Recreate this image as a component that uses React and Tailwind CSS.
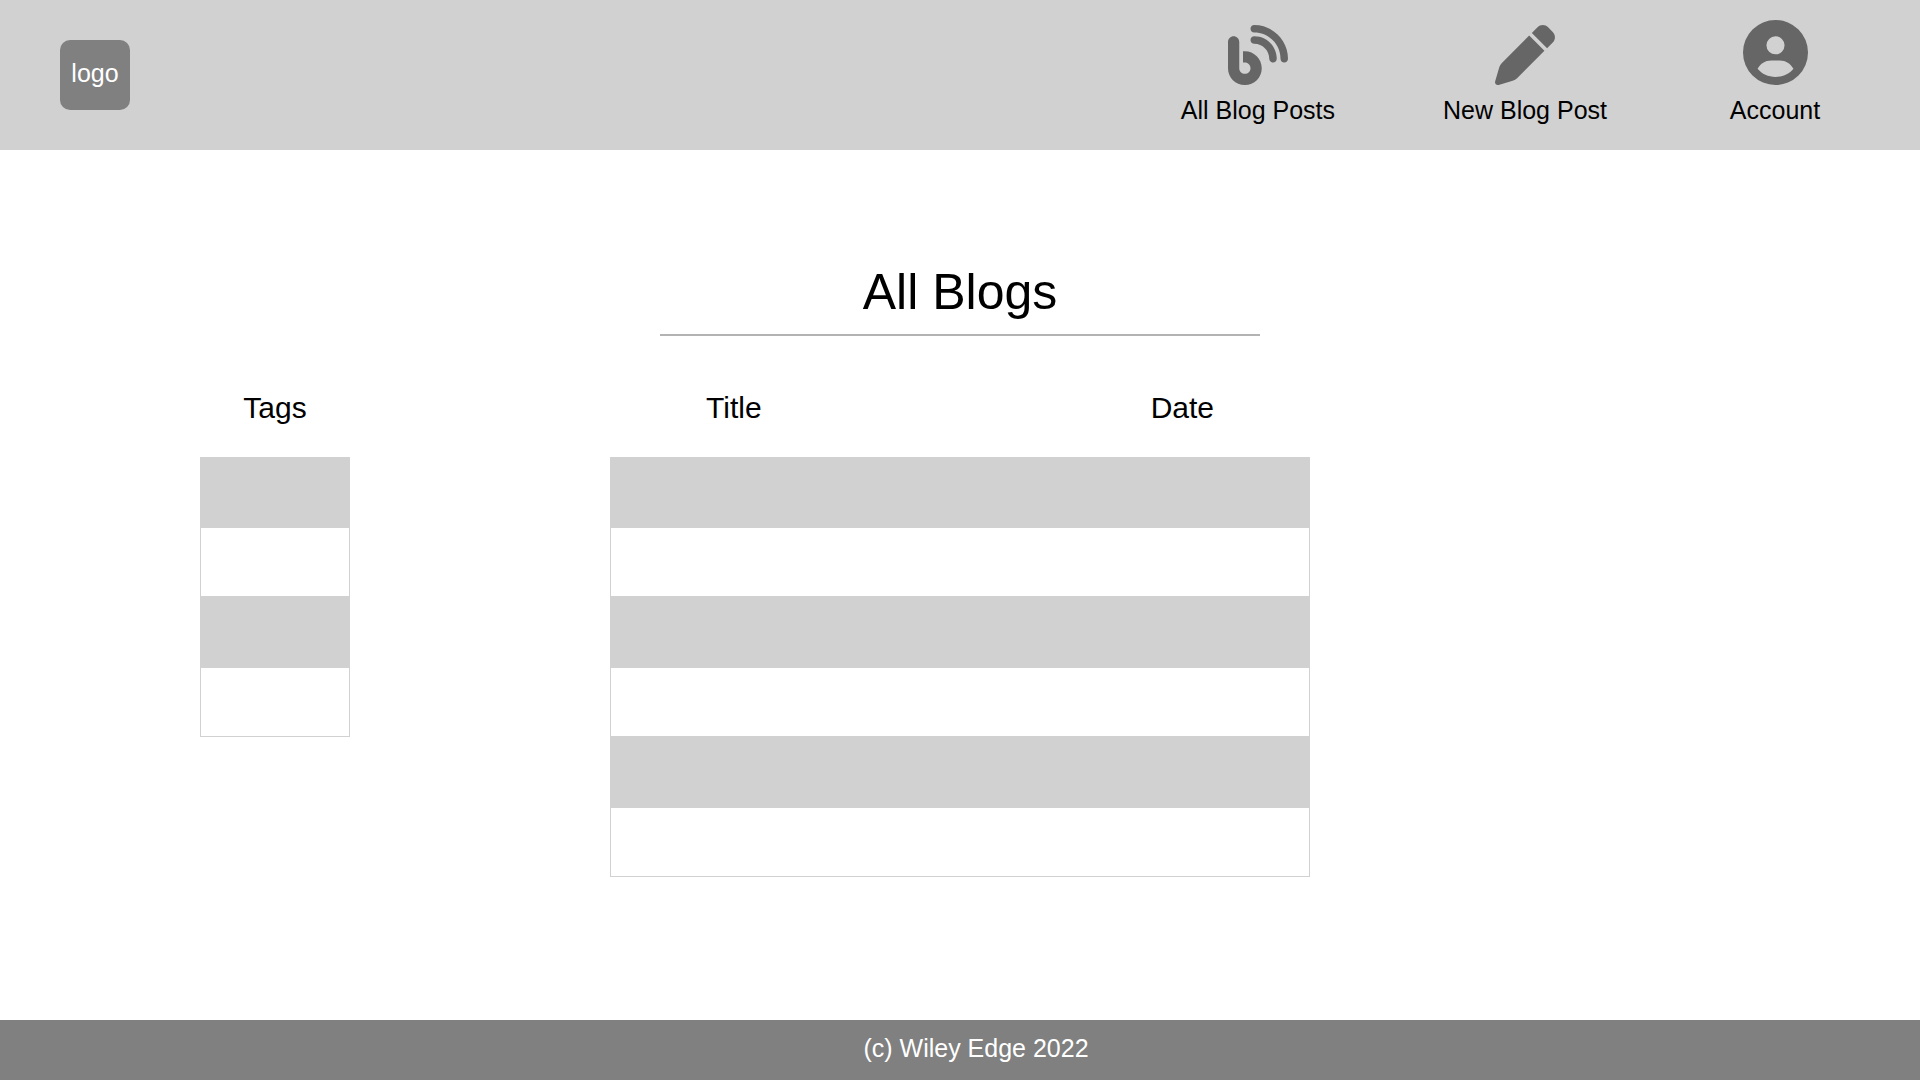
import { FaBlog, FaPen } from "react-icons/fa6";

function AccountIcon({ className }) {
  return (
    <svg viewBox="187 59 196 196" fill="currentColor" fillRule="evenodd" className={className} aria-hidden="true">
      <path d="M285 59a98 98 0 1 0 0 196a98 98 0 1 0 0-196zM285 108a27.3 27.3 0 1 1 0 54.6a27.3 27.3 0 1 1 0-54.6zM231 206C240 190 254 181 272 181H298C316 181 330 190 339 206C326 222 307 230.500 285 230.500C263 230.500 244 222 231 206z" />
    </svg>
  );
}

function NavItem({ label, children }) {
  return (
    <a href="#" className="flex min-w-30 flex-col items-center gap-[10px] whitespace-nowrap">
      <span className="text-[#666666]">{children}</span>
      <span>{label}</span>
    </a>
  );
}

function Rows({ count, columns }) {
  return (
    <tbody>
      {Array.from({ length: count }, (_, row) => (
        <tr key={row} className="h-[70px] odd:bg-[#d1d1d1]">
          {Array.from({ length: columns }, (_, col) => (
            <td key={col} className="border-y border-[#d1d1d1] first:border-l last:border-r" />
          ))}
        </tr>
      ))}
    </tbody>
  );
}

export default function App() {
  return (
    <div className="flex min-h-screen flex-col bg-white font-['Liberation_Sans',Arial,sans-serif] text-[25px] leading-[30px] text-black">
      <header className="flex h-[150px] items-center justify-between bg-[#d1d1d1] pr-[85px] pl-[60px]">
        <a href="#" className="flex size-[70px] items-center justify-center rounded-[10px] bg-[#808080] pb-1 text-white">
          logo
        </a>
        <nav className="flex items-end gap-[108px] self-end pb-[25px]">
          <NavItem label="All Blog Posts">
            <FaBlog className="size-[60px]" aria-hidden="true" />
          </NavItem>
          <NavItem label="New Blog Post">
            <FaPen className="size-[60px]" aria-hidden="true" />
          </NavItem>
          <NavItem label="Account">
            <AccountIcon className="size-[65px]" />
          </NavItem>
        </nav>
      </header>

      <main className="flex-1 pt-28">
        <h1 className="mx-auto max-w-[600px] border-b-2 border-[#b3b3b3] pb-3 text-center text-[50px] leading-[60px]">
          All Blogs
        </h1>
        <div className="mt-[54px] grid grid-cols-[1fr_minmax(0,700px)_1fr] items-start text-[30px] leading-9">
          <table className="ml-[200px] w-[150px] border-separate border-spacing-0">
            <thead>
              <tr>
                <th scope="col" className="pb-[31px] text-center font-normal">Tags</th>
              </tr>
            </thead>
            <Rows count={4} columns={1} />
          </table>
          <table className="w-full border-separate border-spacing-0">
            <thead>
              <tr>
                <th scope="col" className="pb-[31px] pl-24 text-left font-normal">Title</th>
                <th scope="col" className="pr-24 pb-[31px] text-right font-normal">Date</th>
              </tr>
            </thead>
            <Rows count={6} columns={2} />
          </table>
        </div>
      </main>

      <footer className="flex h-[60px] items-center justify-center bg-[#808080] pb-1 pl-8 text-white">
        (c) Wiley Edge 2022
      </footer>
    </div>
  );
}
